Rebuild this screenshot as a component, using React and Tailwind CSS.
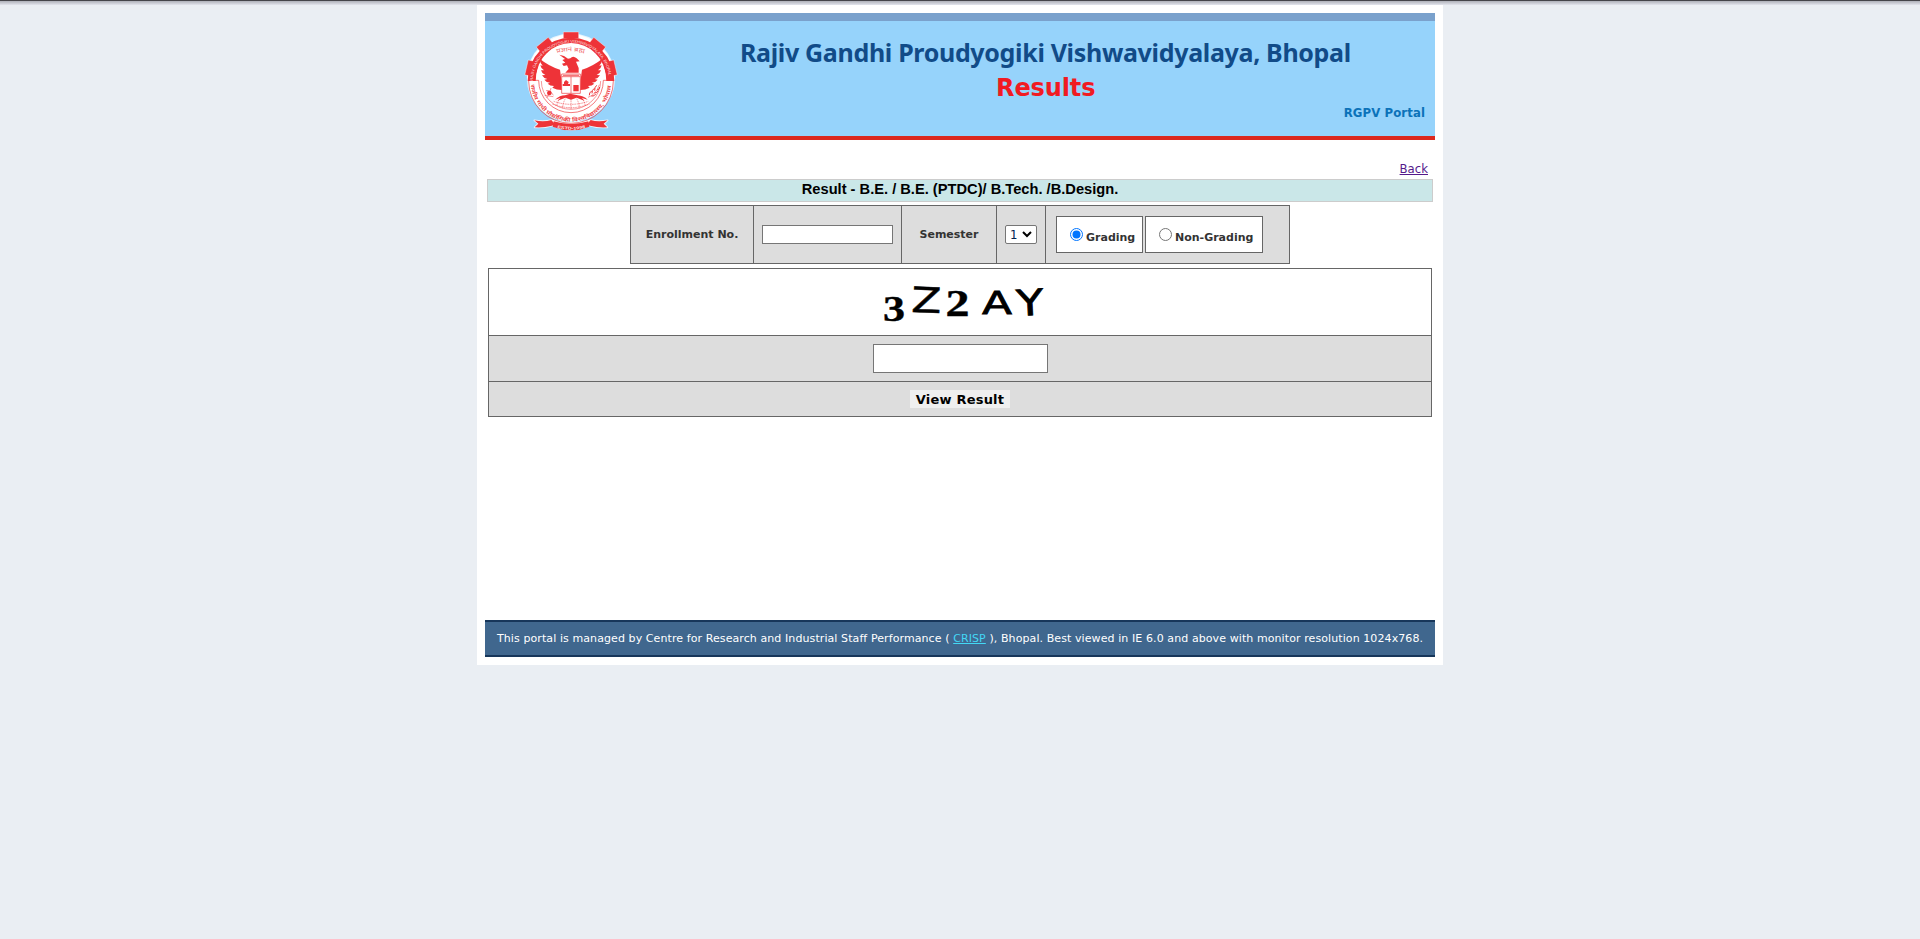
const RED = "#ee3338";

function Feathers({ flip }) {
  return (
    <g transform={flip ? "translate(606 0) scale(-1 1)" : undefined}>
      <path
        d="M209 176 Q236 198 270 209 Q276 240 275 270 Q260 270 247 263 L252 258 Q240 258 233 251 L240 248 Q228 247 223 239 L232 237 Q220 234 216 226 L226 225 Q215 220 213 211 L222 211 Q212 204 211 196 L218 197 Q210 188 209 176Z"
        fill={RED}
      />
    </g>
  );
}

function Crest() {
  return (
    <svg viewBox="159 90 288 306" className="h-[102px] w-[96px] shrink-0" aria-hidden="true">
      <defs>
        <path id="arcTop" d="M189 242 A114 114 0 0 1 417 242" />
        <path id="arcBottom" d="M182 244 A121 121 0 0 0 424 244" />
        <path id="arcMotto" d="M245 164 Q303 144 361 164" />
        <path id="arcRibbon" d="M252 381 Q303 397 354 381" />
      </defs>
      <g stroke="#fff" strokeOpacity="0.75" strokeWidth="5" fill="#fff" strokeLinejoin="round">
        <circle cx="303" cy="233" r="130" />
        <path d="M193 361 Q222 366 244 360 Q303 374 362 360 Q384 366 413 361 L402 371 L412 382 Q384 384 358 376 Q303 402 248 376 Q222 384 194 382 L205 371Z" />
      </g>
      <g fill={RED} stroke="#fff" strokeOpacity="0.6" strokeWidth="2">
        {[-77, -39, 0, 39, 77].map((a) => (
          <path key={a} transform={`rotate(${a} 303 233)`} d="M280 96 H326 V116 H280Z" />
        ))}
      </g>
      <path d="M173 243 A130 130 0 0 1 433 243 L409 243 A106 106 0 0 0 197 243Z" fill={RED} />
      <circle cx="303" cy="233" r="104" fill="#fff" />
      <g fill="none" stroke={RED} strokeWidth="2">
        <path d="M176 243 A127 127 0 0 0 430 243" />
        <path d="M176 241 H206 A97 97 0 0 0 400 241 H430" />
        <path d="M214 243 A89 85 0 0 0 392 243" strokeWidth="1.5" />
        <path d="M209 178 L235 154 M397 178 L371 154" />
      </g>
      <text fill="#fff" fillOpacity="0.85" fontSize="12" fontWeight="400" fontFamily="Liberation Sans, sans-serif">
        <textPath href="#arcTop" textLength="342" lengthAdjust="spacingAndGlyphs">RAJIV GANDHI PROUDYOGIKI VISHWAVIDYALAYA, BHOPAL</textPath>
      </text>
      <text fill={RED} fillOpacity="0.9" fontSize="16" fontWeight="700" fontFamily="Noto Sans, sans-serif">
        <textPath href="#arcBottom" startOffset="10" textLength="356" lengthAdjust="spacingAndGlyphs">राजीव गांधी प्रौद्योगिकी विश्वविद्यालय, भोपाल</textPath>
      </text>
      <text fill={RED} fillOpacity="0.8" fontSize="17" fontFamily="Noto Sans, sans-serif">
        <textPath href="#arcMotto" startOffset="16" textLength="84" lengthAdjust="spacingAndGlyphs">प्रज्ञानं ब्रह्म</textPath>
      </text>
      <Feathers />
      <Feathers flip />
      <g fill={RED}>
        <path d="M268 164 L282 168 L294 176 L301 175 Q309 166 320 175 L329 184 L318 185 L326 204 L326 218 L286 218 L296 207 L291 196 L281 198 L276 191 L286 188 L277 180 L285 177Z" />
        <path d="M310 255 H326 V274 H310Z M278 252 H300 V258 H278Z" />
        <path d="M282 246 L288 240 L296 246 L294 252 H282Z" />
        <circle cx="238" cy="279" r="7" />
        <path d="M255 299 Q270 286 285 286 L300 281 L323 286 Q340 287 353 299 L336 294 L343 302 L320 293 L303 299 L286 293 L263 302 L271 294Z" />
      </g>
      <g fill="none" stroke={RED} strokeWidth="2">
        <path d="M275 222 H331 V230 H275Z M275 230 V280 H331 V230 M303 230 V280" />
        <path d="M280 226 H326" strokeWidth="4" strokeDasharray="4 2" />
        <path d="M228 272 Q240 268 250 286 M224 286 L250 290 M243 264 Q240 284 230 294" strokeWidth="1.5" />
        <path d="M251 304 Q303 322 355 304 M247 312 Q303 334 359 312 M303 294 V329 M286 296 Q278 310 278 325 M320 296 Q328 310 328 325 M266 299 L260 316 M340 299 L346 316" strokeWidth="1.5" strokeDasharray="5 2" />
        <path d="M354 292 Q378 284 388 254" strokeWidth="1.5" />
      </g>
      <g fill="none" stroke={RED} strokeWidth="3">
        <path d="M358 286 Q357 278 365 273 M366 280 Q365 270 373 265 M374 272 Q373 262 380 256 M364 288 Q373 290 377 282 M373 279 Q382 280 385 272 M381 270 Q389 269 389 261" />
      </g>
      <g fill={RED}>
        <path d="M193 361 Q222 367 244 360 L255 373 L246 377 Q220 384 194 382 L205 371Z" />
        <path d="M413 361 Q384 367 362 360 L351 373 L360 377 Q386 384 412 382 L401 371Z" />
        <path d="M251 364 Q303 380 355 364 L358 380 Q303 402 248 380Z" />
      </g>
      <text fill="#fff" fillOpacity="0.9" fontSize="12" fontWeight="700" fontFamily="Liberation Sans, sans-serif">
        <textPath href="#arcRibbon" startOffset="10" textLength="86" lengthAdjust="spacingAndGlyphs">ESTD-1998</textPath>
      </text>
    </svg>
  );
}

function Header() {
  return (
    <header className="flex h-[127px] border-t-8 border-b-4 border-t-[#7aa1cc] border-b-[#dc281e] bg-[#96d3fb]">
      <div className="w-[171px] pt-[9px] pl-[38px]">
        <Crest />
      </div>
      <div className="flex flex-1 flex-col font-bold">
        <h1 className="mt-[14px] ml-[84px] font-['Noto_Sans',sans-serif] text-[25px] leading-[34px] tracking-[-0.33px] whitespace-nowrap text-[#114b88]">
          Rajiv Gandhi Proudyogiki Vishwavidyalaya, Bhopal
        </h1>
        <h2 className="mt-[2px] ml-[340px] text-[24px] leading-[34px] tracking-[-0.1px] text-[#f11a22]">Results</h2>
        <a className="mr-[10px] self-end font-['DejaVu_Sans_Condensed','DejaVu_Sans',sans-serif] text-[13px] leading-[16px] tracking-[0.1px] text-[#0b72b9]">
          RGPV Portal
        </a>
      </div>
    </header>
  );
}

function Choice({ label, checked, className }) {
  return (
    <label className={`flex h-[37px] items-center border border-[#666] bg-white pl-[13px] ${className}`}>
      <svg viewBox="0 0 13 13" className="h-[13px] w-[13px] shrink-0">
        <circle cx="6.5" cy="6.5" r="6" fill="#fff" stroke={checked ? "#0075ff" : "#767676"} />
        {checked && <circle cx="6.5" cy="6.5" r="4" fill="#0075ff" />}
      </svg>
      <span className="mt-[8px] ml-[3px] whitespace-nowrap">{label}</span>
    </label>
  );
}

function QueryRow() {
  return (
    <div className="mt-[3px] ml-[145px] flex h-[59px] w-[660px] divide-x divide-[#666] border border-[#666] bg-[#ddd] text-[11px] font-bold text-[#333]">
      <div className="flex w-[123px] items-center justify-center pt-[1px]">Enrollment No.</div>
      <div className="flex w-[148px] items-center pl-[8px]">
        <input className="h-[19px] w-[131px] border border-[#767676] bg-white" />
      </div>
      <div className="flex w-[95px] items-center justify-center pt-[1px]">Semester</div>
      <div className="flex w-[49px] items-center pl-[8px]">
        <div className="flex h-[19px] w-[32px] items-center rounded-[2px] border border-[#767676] bg-white pl-[4px] font-['DejaVu_Sans_Condensed',sans-serif] text-[13px] font-normal text-[#00224f]">
          <span>1</span>
          <svg viewBox="0 0 10 7" className="ml-[5px] h-[7px] w-[10px]" fill="none" stroke="#000" strokeWidth="2">
            <path d="M1 1 L5 5 L9 1" />
          </svg>
        </div>
      </div>
      <div className="flex flex-1 items-center gap-[2px] pl-[10px]">
        <Choice label="Grading" checked className="w-[87px]" />
        <Choice label="Non-Grading" className="w-[118px]" />
      </div>
    </div>
  );
}

function Captcha() {
  return (
    <svg viewBox="0 0 180 50" className="h-[50px] w-[180px]" fill="#000">
      <text x="13" y="43.8" fontSize="36" fontWeight="700" fontFamily="Liberation Serif, serif" stroke="#000" strokeWidth="0.4" textLength="22" lengthAdjust="spacingAndGlyphs">3</text>
      <text x="0" y="0" fontSize="35" fontFamily="DejaVu Sans, sans-serif" stroke="#000" strokeWidth="0.5" transform="translate(41 35) rotate(2)" textLength="30" lengthAdjust="spacingAndGlyphs">Z</text>
      <text x="75.5" y="39" fontSize="38" fontWeight="700" fontFamily="Liberation Serif, serif" stroke="#000" strokeWidth="0.4" textLength="24" lengthAdjust="spacingAndGlyphs">2</text>
      <text x="112" y="37.3" fontSize="32.5" fontFamily="DejaVu Sans, sans-serif" stroke="#000" strokeWidth="0.8" textLength="30" lengthAdjust="spacingAndGlyphs">A</text>
      <text x="0" y="0" fontSize="36" fontFamily="DejaVu Sans, sans-serif" stroke="#000" strokeWidth="0.8" transform="translate(147 39) rotate(-3)" textLength="27" lengthAdjust="spacingAndGlyphs">Y</text>
    </svg>
  );
}

export default function App() {
  return (
    <div className="min-h-[939px] bg-[#eaeef3] font-['DejaVu_Sans',sans-serif]">
      <div className="h-[5px] bg-linear-to-b from-[#45454a] from-20% via-[#b5b7bf] via-30% to-[#e3e5ed]" />
      <main className="mx-auto flex h-[660px] w-[966px] flex-col bg-white p-[8px]">
        <Header />
        <div className="flex h-[39px] items-end justify-end pr-[7px]">
          <a className="font-['DejaVu_Sans_Condensed',sans-serif] text-[13px] leading-[20px] text-[#551a8b] underline">Back</a>
        </div>
        <div className="mx-[2px] h-[23px] border border-[#ccc] bg-[#cae7e8] text-center font-['Liberation_Sans',Arial,sans-serif] text-[14.67px] leading-[18px] font-bold text-black">
          <span>Result - B.E. / B.E. (PTDC)/ B.Tech. /B.Design.</span>
        </div>
        <QueryRow />
        <div className="mx-[3px] mt-[4px] divide-y divide-[#666] border border-[#666] bg-[#ddd]">
          <div className="flex h-[67px] items-center justify-center bg-white">
            <Captcha />
          </div>
          <div className="flex h-[46px] items-center justify-center">
            <input className="h-[29px] w-[175px] border border-[#767676] bg-white" />
          </div>
          <div className="flex h-[34px] items-center justify-center">
            <button className="flex h-[18px] w-[100px] items-center justify-center bg-[#efefef] pt-[1px] text-[13px] leading-[17px] font-bold tracking-[0.2px] whitespace-nowrap text-black">
              View Result
            </button>
          </div>
        </div>
        <footer className="mt-auto flex h-[37px] items-center border-y-2 border-[#17365a] bg-[#40678e] pt-[1px] pl-[12px] text-[11px] tracking-[0.09px] whitespace-pre text-white">
          <span>This portal is managed by Centre for Research and Industrial Staff Performance ( </span>
          <a className="text-[#43d8f5] underline">CRISP</a>
          <span> ), Bhopal. Best viewed in IE 6.0 and above with monitor resolution 1024x768.</span>
        </footer>
      </main>
    </div>
  );
}
